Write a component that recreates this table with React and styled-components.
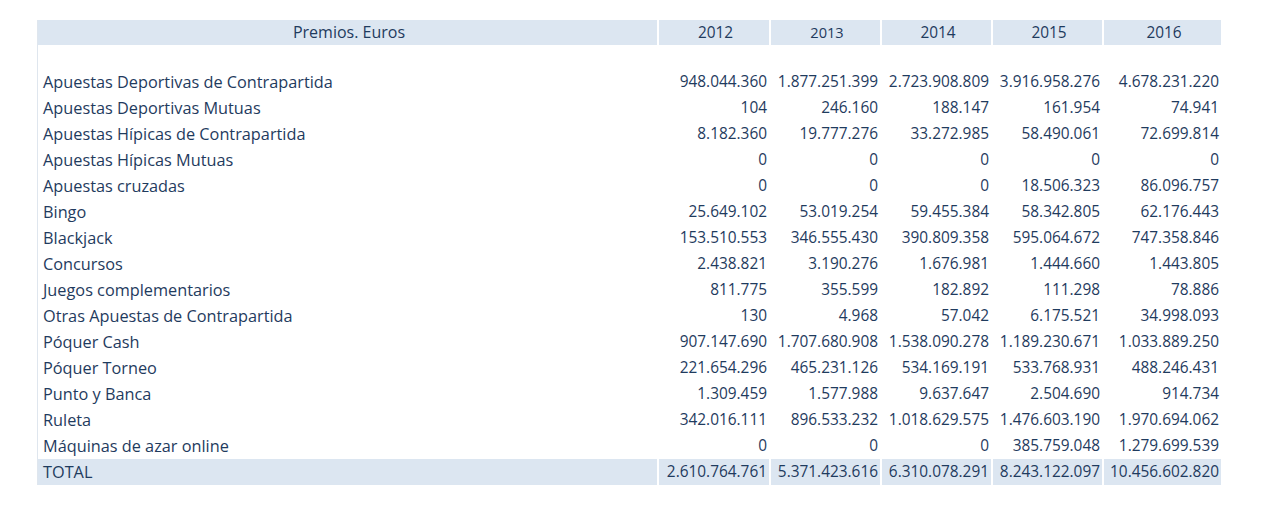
import React from "react";
import styled, { createGlobalStyle } from "styled-components";

const GlobalStyle = createGlobalStyle`
  body {
    margin: 0;
    background: #ffffff;
    font-family: "Open Sans", "Noto Sans", sans-serif;
  }
`;

const Page = styled.div`
  padding: 20px 0 0 37px;
`;

const Grid = styled.div`
  display: grid;
  grid-template-columns: 619px 110px 109px 109px 109px 117px;
  column-gap: 2px;
  width: max-content;
  border-left: 1px solid #dfe6ee;
  color: #1f3b5e;
  font-size: 15.4px;
`;

const Cell = styled.div`
  height: ${(p) => (p.$head ? "25px" : "26px")};
  line-height: ${(p) => (p.$head ? "25px" : "26px")};
  padding: 0 2px 0 5px;
  white-space: nowrap;
  text-align: ${(p) => (p.$center ? "center" : p.$label ? "left" : "right")};
  background: ${(p) => (p.$shaded ? "#dce6f1" : "transparent")};
  font-size: ${(p) =>
    p.$small ? "14.6px" : p.$label ? "16.3px" : p.$title ? "16px" : "inherit"};
`;

const Spacer = styled.div`
  grid-column: 1 / -1;
  height: 24px;
`;

const years = ["2012", "2013", "2014", "2015", "2016"];

const rows = [
  ["Apuestas Deportivas de Contrapartida", "948.044.360", "1.877.251.399", "2.723.908.809", "3.916.958.276", "4.678.231.220"],
  ["Apuestas Deportivas Mutuas", "104", "246.160", "188.147", "161.954", "74.941"],
  ["Apuestas Hípicas de Contrapartida", "8.182.360", "19.777.276", "33.272.985", "58.490.061", "72.699.814"],
  ["Apuestas Hípicas Mutuas", "0", "0", "0", "0", "0"],
  ["Apuestas cruzadas", "0", "0", "0", "18.506.323", "86.096.757"],
  ["Bingo", "25.649.102", "53.019.254", "59.455.384", "58.342.805", "62.176.443"],
  ["Blackjack", "153.510.553", "346.555.430", "390.809.358", "595.064.672", "747.358.846"],
  ["Concursos", "2.438.821", "3.190.276", "1.676.981", "1.444.660", "1.443.805"],
  ["Juegos complementarios", "811.775", "355.599", "182.892", "111.298", "78.886"],
  ["Otras Apuestas de Contrapartida", "130", "4.968", "57.042", "6.175.521", "34.998.093"],
  ["Póquer Cash", "907.147.690", "1.707.680.908", "1.538.090.278", "1.189.230.671", "1.033.889.250"],
  ["Póquer Torneo", "221.654.296", "465.231.126", "534.169.191", "533.768.931", "488.246.431"],
  ["Punto y Banca", "1.309.459", "1.577.988", "9.637.647", "2.504.690", "914.734"],
  ["Ruleta", "342.016.111", "896.533.232", "1.018.629.575", "1.476.603.190", "1.970.694.062"],
  ["Máquinas de azar online", "0", "0", "0", "385.759.048", "1.279.699.539"],
];

const total = ["TOTAL", "2.610.764.761", "5.371.423.616", "6.310.078.291", "8.243.122.097", "10.456.602.820"];

export default function App() {
  return (
    <>
      <GlobalStyle />
      <Page>
        <Grid>
          <Cell $head $shaded $center $title>Premios. Euros</Cell>
          {years.map((y) => (
            <Cell key={y} $head $shaded $center $small={y === "2013"}>
              {y}
            </Cell>
          ))}
          <Spacer />
          {rows.map((r) =>
            r.map((v, i) => (
              <Cell key={r[0] + i} $label={i === 0}>
                {v}
              </Cell>
            ))
          )}
          {total.map((v, i) => (
            <Cell key={"t" + i} $label={i === 0} $shaded>
              {v}
            </Cell>
          ))}
        </Grid>
      </Page>
    </>
  );
}
